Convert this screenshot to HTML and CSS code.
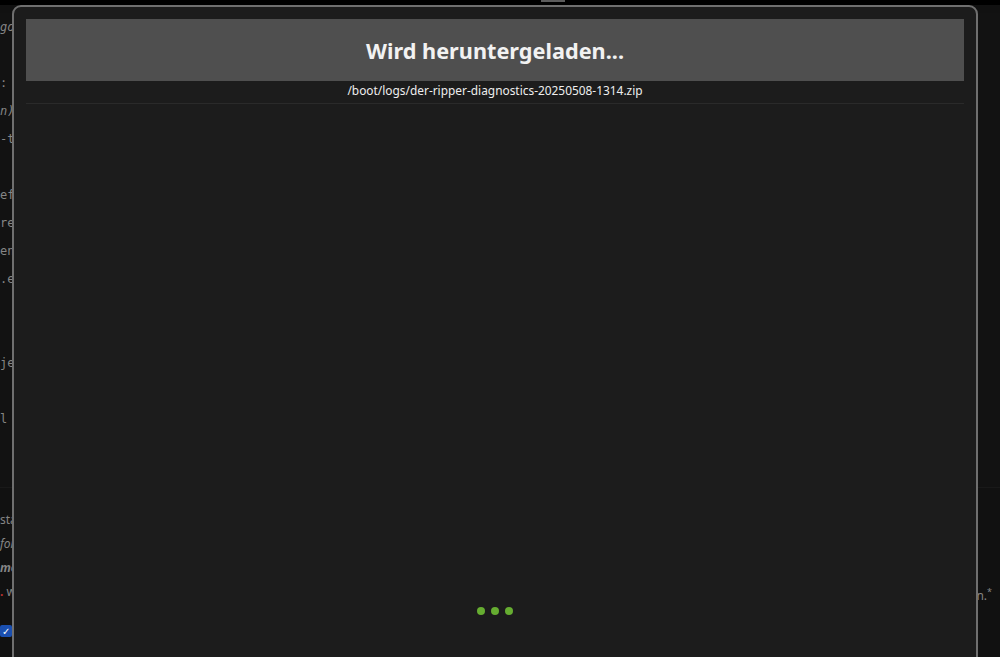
FILE: index.html
```html
<!DOCTYPE html>
<html lang="de">
<head>
<meta charset="UTF-8">
<meta name="viewport" content="width=device-width, initial-scale=1.0">
<title>Diagnose herunterladen</title>
<link rel="stylesheet" href="styles.css">
</head>
<body>
<div class="topbar"><span class="tab"></span></div>

<!-- settings page behind the dialog -->
<div class="page">
    <div class="code">
        <div class="line em">go</div>
        <div class="line"></div>
        <div class="line">: s</div>
        <div class="line em">n)</div>
        <div class="line">-t</div>
        <div class="line"></div>
        <div class="line">efe</div>
        <div class="line">ree</div>
        <div class="line">en.</div>
        <div class="line">.er</div>
        <div class="line"></div>
        <div class="line"></div>
        <div class="line">je</div>
        <div class="line"></div>
        <div class="line">l</div>
    </div>
    <div class="notes">
        <div class="note">star</div>
        <div class="note em">for</div>
        <div class="note em strong">mög</div>
        <div class="note split"><span><b class="req">.</b> w</span><span>en.<sup>*</sup></span></div>
        <div class="check"><span class="box">&#10003;</span></div>
    </div>
</div>

<div class="modal">
    <div class="modal-head">
        <h2>Wird heruntergeladen...</h2>
    </div>
    <div class="modal-file">/boot/logs/der-ripper-diagnostics-20250508-1314.zip</div>
    <div class="modal-body">
        <div class="loader">
            <span></span><span></span><span></span>
        </div>
    </div>
</div>
</body>
</html>
```

FILE: styles.css
```css
html, body {
    margin: 0;
    height: 100%;
    overflow: hidden;
}

body {
    background: #111111;
    color: #858585;
    font-family: 'Noto Sans', 'Open Sans', sans-serif;
}

.topbar {
    height: 5px;
    background: #000;
    display: flex;
    justify-content: center;
}

.topbar .tab {
    width: 24px;
    height: 2px;
    margin-left: 106px;
    background: #5c5c5c;
}

/* page content, mostly hidden by the dialog */
.page {
    padding-top: 8px;
}

.code {
    font-family: 'DejaVu Sans Mono', monospace;
    font-size: 12px;
    line-height: 28px;
    height: 474px;
    border-bottom: 1px solid #191919;
    background: #121212;
}

.line {
    height: 28px;
}

.line:first-child {
    margin-top: 0;
}

.line,
.note {
    white-space: nowrap;
}

.em {
    font-style: italic;
}

.strong {
    font-weight: bold;
}

.notes {
    padding-top: 20px;
    font-size: 12px;
}

.note {
    height: 24px;
    line-height: 24px;
}

.note.split {
    display: flex;
    justify-content: space-between;
    padding-right: 8px;
}

.req {
    color: #b33;
}

sup {
    font-size: 9px;
}

.check {
    padding-top: 18px;
}

.check .box {
    display: inline-flex;
    align-items: center;
    justify-content: center;
    width: 12px;
    height: 12px;
    border-radius: 2px;
    background: #1a4fb0;
    color: #fff;
    font-size: 10px;
}

/* download dialog */
.modal {
    position: fixed;
    top: 5px;
    left: 12px;
    width: 938px;
    height: 720px;
    padding: 12px;
    background: #1c1c1c;
    border: 2px solid #6f6f6f;
    border-radius: 9px;
    color: #fff;
}

.modal-head {
    height: 62px;
    display: flex;
    align-items: center;
    justify-content: center;
    background: #4f4f4f;
}

.modal-head h2 {
    margin: 0;
    font-size: 21.7px;
    font-weight: bold;
    color: #f2f2f2;
}

.modal-file {
    text-align: center;
    font-size: 11.9px;
    line-height: 19px;
    color: #eeeeee;
    padding-bottom: 3px;
    border-bottom: 1px solid #2a2a2a;
}

.modal-body {
    padding-top: 503px;
}

.loader {
    display: flex;
    justify-content: center;
    gap: 6px;
}

.loader span {
    width: 8px;
    height: 8px;
    border-radius: 50%;
    background: #66ad31;
}
```
